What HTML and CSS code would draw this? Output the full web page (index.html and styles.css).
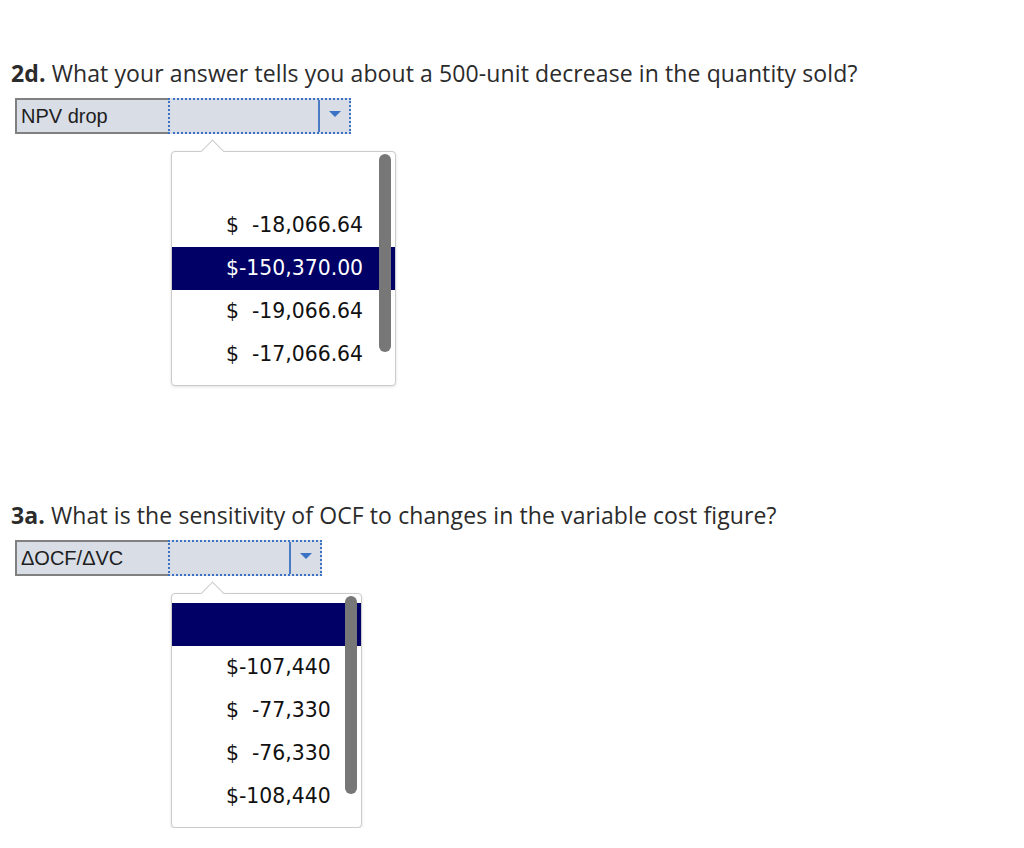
FILE: index.html
```html
<!DOCTYPE html>
<html>
<head>
<meta charset="utf-8">
<link rel="stylesheet" href="styles.css">
</head>
<body>
<div class="page">
  <section class="q q1">
    <p class="prompt"><b>2d.</b> What your answer tells you about a 500-unit decrease in the quantity sold?</p>
    <div class="select">
      <div class="sel-label">NPV drop</div>
      <div class="sel-drop drop1"><span class="sel-fill"></span><span class="sel-btn"><span class="sel-arrow"></span></span></div>
    </div>
    <div class="popup pop1">
      <ul class="opts">
        <li class="opt"></li>
        <li class="opt">$&nbsp; -18,066.64</li>
        <li class="opt sel">$-150,370.00</li>
        <li class="opt">$&nbsp; -19,066.64</li>
        <li class="opt">$&nbsp; -17,066.64</li>
      </ul>
      <div class="scroll"></div>
    </div>
  </section>
  <section class="q q2">
    <p class="prompt"><b>3a.</b> What is the sensitivity of OCF to changes in the variable cost figure?</p>
    <div class="select">
      <div class="sel-label">ΔOCF/ΔVC</div>
      <div class="sel-drop drop2"><span class="sel-fill"></span><span class="sel-btn"><span class="sel-arrow"></span></span></div>
    </div>
    <div class="popup pop2">
      <ul class="opts">
        <li class="opt sel"></li>
        <li class="opt">$-107,440</li>
        <li class="opt">$&nbsp; -77,330</li>
        <li class="opt">$&nbsp; -76,330</li>
        <li class="opt">$-108,440</li>
      </ul>
      <div class="scroll"></div>
    </div>
  </section>
</div>
</body>
</html>
```
FILE: styles.css
```css
html, body {
  margin: 0;
  padding: 0;
  background: #fff;
}
.page {
  padding: 61px 0 0 11px;
}
.q2 {
  margin-top: 117px;
}
.prompt {
  margin: 0;
  font-family: "Open Sans", sans-serif;
  font-size: 23px;
  line-height: 24px;
  letter-spacing: 0.1px;
  color: #2b2b2b;
}
.prompt b {
  font-weight: 700;
}
.select {
  display: flex;
  margin: 13px 0 0 4px;
  height: 36px;
}
.sel-label {
  box-sizing: border-box;
  width: 153px;
  height: 36px;
  background: #d9dde6;
  border: 2px solid #808080;
  border-right: none;
  font-family: "Liberation Sans", Arial, sans-serif;
  font-size: 20px;
  line-height: 32px;
  color: #1e1e1e;
  padding-left: 4px;
}
.sel-drop {
  display: flex;
  box-sizing: border-box;
  height: 36px;
  background: #d9dde6;
  border: 2px dotted #3a72c6;
}
.drop1 { width: 183px; }
.drop2 { width: 154px; }
.sel-fill {
  flex: 1;
}
.sel-btn {
  width: 29px;
  border-left: 2px solid #4a7bc4;
  display: flex;
  align-items: center;
  justify-content: center;
}
.sel-arrow {
  width: 0;
  height: 0;
  border-left: 6px solid transparent;
  border-right: 6px solid transparent;
  border-top: 6px solid #3a72c6;
  margin-top: -4px;
}
.popup {
  position: relative;
  margin: 17px 0 0 160px;
  box-sizing: border-box;
  background: #fff;
  border: 1px solid #cbcbcb;
  border-radius: 4px;
  box-shadow: 0 1px 3px rgba(0,0,0,0.12);
  padding: 9px 0;
}
.pop1 { width: 225px; }
.pop2 { width: 191px; }
.popup::before {
  content: "";
  position: absolute;
  left: 32px;
  top: -9px;
  width: 16px;
  height: 16px;
  background: #fff;
  border-top: 1px solid #cbcbcb;
  border-left: 1px solid #cbcbcb;
  transform: rotate(45deg);
}
.opts {
  list-style: none;
  margin: 0;
  padding: 0;
  position: relative;
}
.opt {
  height: 43px;
  line-height: 43px;
  padding-left: 54px;
  font-family: "DejaVu Sans", Verdana, sans-serif;
  font-size: 20.4px;
  color: #111;
  white-space: nowrap;
}
.opt.sel {
  background: #000066;
  color: #fff;
}
.scroll {
  position: absolute;
  right: 4px;
  top: 2px;
  width: 12px;
  height: 198px;
  border-radius: 6px;
  background: #777;
}
```
